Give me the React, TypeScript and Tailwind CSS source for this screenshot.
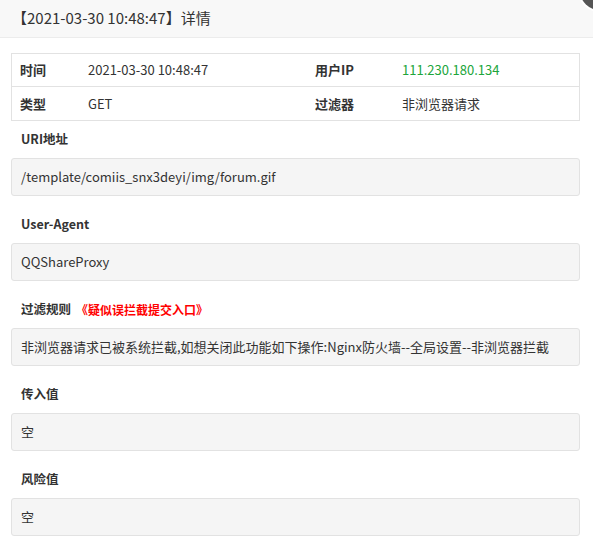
import React from "react";

const font = { fontFamily: '"Noto Sans CJK SC", "Noto Sans", sans-serif' };

function Section({ label, extra, value }: { label: string; extra?: string; value: string }) {
  return (
    <div className="flex flex-col">
      <div className="h-[37px] flex items-center pl-[10px] text-[12.5px] font-semibold text-[#333] leading-none">
        <span>{label}</span>
        {extra && <span className="ml-[5px] text-[12px] text-[#ff0000]">{extra}</span>}
      </div>
      <div className="h-[38px] flex items-center bg-[#f5f5f5] border border-[#e2e2e2] rounded-[3px] pl-[9px] text-[13px] text-[#333] whitespace-nowrap overflow-hidden">
        {value}
      </div>
    </div>
  );
}

export default function App() {
  return (
    <div className="relative w-[593px] h-[554px] overflow-hidden bg-white" style={font}>
      <div className="h-[38px] bg-[#f8f8f8] border-b border-[#ececec] flex items-center pl-[12px] text-[15px] text-[#333]">
        【2021-03-30 10:48:47】详情
      </div>
      <div className="absolute top-[-31px] left-[578px] w-[43px] h-[43px] rounded-full bg-white flex items-center justify-center">
        <div className="w-[39px] h-[39px] rounded-full bg-[#555]" />
      </div>
      <div className="pl-[11px] pr-[13px] pt-[15px] flex flex-col">
        <div className="border border-[#e2e2e2] text-[13px] text-[#333]">
          <div className="grid grid-cols-[68px_227px_87px_1fr] h-[33px] items-center border-b border-[#e2e2e2]">
            <div className="pl-[8px] font-semibold">时间</div>
            <div className="pl-[8px]">2021-03-30 10:48:47</div>
            <div className="pl-[8px] font-semibold">用户IP</div>
            <div className="pl-[8px] text-[#20a53a]">111.230.180.134</div>
          </div>
          <div className="grid grid-cols-[68px_227px_87px_1fr] h-[33px] items-center">
            <div className="pl-[8px] font-semibold">类型</div>
            <div className="pl-[8px]">GET</div>
            <div className="pl-[8px] font-semibold">过滤器</div>
            <div className="pl-[8px]">非浏览器请求</div>
          </div>
        </div>
        <div className="flex flex-col gap-[10px]">
          <Section label="URI地址" value="/template/comiis_snx3deyi/img/forum.gif" />
          <Section label="User-Agent" value="QQShareProxy" />
          <Section
            label="过滤规则"
            extra="《疑似误拦截提交入口》"
            value="非浏览器请求已被系统拦截,如想关闭此功能如下操作:Nginx防火墙--全局设置--非浏览器拦截"
          />
          <Section label="传入值" value="空" />
          <Section label="风险值" value="空" />
        </div>
      </div>
    </div>
  );
}
